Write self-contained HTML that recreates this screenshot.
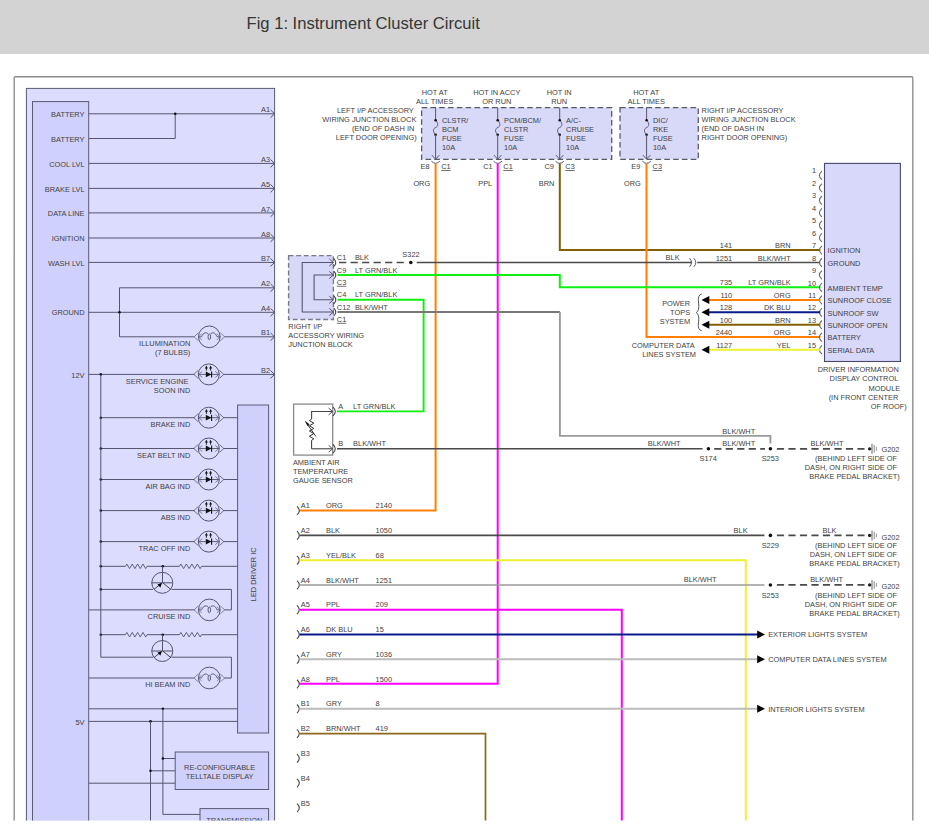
<!DOCTYPE html>
<html><head><meta charset="utf-8"><style>
html,body{margin:0;padding:0;background:#fff;width:929px;height:836px;overflow:hidden}
#hdr{position:absolute;left:0;top:0;width:929px;height:53.5px;background:#d3d3d3}
#ttl{position:absolute;left:246.5px;top:14.2px;line-height:19px;font-family:"Liberation Sans",sans-serif;font-size:16.6px;color:#363636;white-space:nowrap}
svg{position:absolute;left:0;top:0}
svg text{font-family:"Liberation Sans",sans-serif}
</style></head><body>
<div id="hdr"></div><div id="ttl">Fig 1: Instrument Cluster Circuit</div>
<svg width="929" height="836" viewBox="0 0 929 836">
<defs><clipPath id="cp"><rect x="0" y="60" width="929" height="760.6"/></clipPath></defs>
<g clip-path="url(#cp)">
<path d="M14.2,836 L14.2,78 Q14.2,76.8 15.4,76.8 L911.6,76.8 Q912.8,76.8 912.8,78 L912.8,836" stroke="#8e8e8e" stroke-width="1.4" fill="none" />
<rect x="26.4" y="88.4" width="248.2" height="900" stroke="#5a5a74" stroke-width="1.0" fill="#dcdcfe"/>
<rect x="32.5" y="101.6" width="56.2" height="900" stroke="#5a5a74" stroke-width="1.0" fill="#d0d0fc"/>
<text x="84.5" y="116.95" text-anchor="end" font-size="7.4" fill="#424242" >BATTERY</text>
<text x="84.5" y="141.65" text-anchor="end" font-size="7.4" fill="#424242" >BATTERY</text>
<text x="84.5" y="166.55" text-anchor="end" font-size="7.4" fill="#424242" >COOL LVL</text>
<text x="84.5" y="191.55" text-anchor="end" font-size="7.4" fill="#424242" >BRAKE LVL</text>
<text x="84.5" y="216.05" text-anchor="end" font-size="7.4" fill="#424242" >DATA LINE</text>
<text x="84.5" y="241.15" text-anchor="end" font-size="7.4" fill="#424242" >IGNITION</text>
<text x="84.5" y="265.55" text-anchor="end" font-size="7.4" fill="#424242" >WASH LVL</text>
<text x="84.5" y="315.45" text-anchor="end" font-size="7.4" fill="#424242" >GROUND</text>
<text x="270" y="112.45" text-anchor="end" font-size="7.4" fill="#424242" >A1</text>
<text x="270" y="162.05" text-anchor="end" font-size="7.4" fill="#424242" >A3</text>
<text x="270" y="187.05" text-anchor="end" font-size="7.4" fill="#424242" >A5</text>
<text x="270" y="211.55" text-anchor="end" font-size="7.4" fill="#424242" >A7</text>
<text x="270" y="236.65" text-anchor="end" font-size="7.4" fill="#424242" >A8</text>
<text x="270" y="261.05" text-anchor="end" font-size="7.4" fill="#424242" >B7</text>
<text x="270" y="286.45" text-anchor="end" font-size="7.4" fill="#424242" >A2</text>
<text x="270" y="310.95" text-anchor="end" font-size="7.4" fill="#424242" >A4</text>
<text x="270" y="335.45" text-anchor="end" font-size="7.4" fill="#424242" >B1</text>
<line x1="88.7" y1="113.8" x2="274.6" y2="113.8" stroke="#55556f" stroke-width="1"/>
<polyline points="270.5,109.9 274.6,113.8 270.5,117.7" stroke="#55556f" stroke-width="1" fill="none" stroke-linejoin="miter"/>
<line x1="88.7" y1="163.4" x2="274.6" y2="163.4" stroke="#55556f" stroke-width="1"/>
<polyline points="270.5,159.5 274.6,163.4 270.5,167.3" stroke="#55556f" stroke-width="1" fill="none" stroke-linejoin="miter"/>
<line x1="88.7" y1="188.4" x2="274.6" y2="188.4" stroke="#55556f" stroke-width="1"/>
<polyline points="270.5,184.5 274.6,188.4 270.5,192.3" stroke="#55556f" stroke-width="1" fill="none" stroke-linejoin="miter"/>
<line x1="88.7" y1="212.9" x2="274.6" y2="212.9" stroke="#55556f" stroke-width="1"/>
<polyline points="270.5,209 274.6,212.9 270.5,216.8" stroke="#55556f" stroke-width="1" fill="none" stroke-linejoin="miter"/>
<line x1="88.7" y1="238" x2="274.6" y2="238" stroke="#55556f" stroke-width="1"/>
<polyline points="270.5,234.1 274.6,238 270.5,241.9" stroke="#55556f" stroke-width="1" fill="none" stroke-linejoin="miter"/>
<line x1="88.7" y1="262.4" x2="274.6" y2="262.4" stroke="#55556f" stroke-width="1"/>
<polyline points="270.5,258.5 274.6,262.4 270.5,266.3" stroke="#55556f" stroke-width="1" fill="none" stroke-linejoin="miter"/>
<line x1="88.7" y1="312.3" x2="274.6" y2="312.3" stroke="#55556f" stroke-width="1"/>
<polyline points="270.5,308.4 274.6,312.3 270.5,316.2" stroke="#55556f" stroke-width="1" fill="none" stroke-linejoin="miter"/>
<polyline points="88.7,138.5 175.2,138.5 175.2,113.8" stroke="#55556f" stroke-width="1" fill="none" stroke-linejoin="miter"/>
<circle cx="175.2" cy="113.8" r="1.3" fill="#111"/>
<polyline points="274.6,287.8 119.5,287.8 119.5,336.8 194.1,336.8" stroke="#55556f" stroke-width="1" fill="none" stroke-linejoin="miter"/>
<polyline points="270.5,283.9 274.6,287.8 270.5,291.7" stroke="#55556f" stroke-width="1" fill="none" stroke-linejoin="miter"/>
<polyline points="270.5,332.9 274.6,336.8 270.5,340.7" stroke="#55556f" stroke-width="1" fill="none" stroke-linejoin="miter"/>
<line x1="224.7" y1="336.8" x2="274.6" y2="336.8" stroke="#55556f" stroke-width="1"/>
<circle cx="119.5" cy="312.3" r="1.3" fill="#111"/>
<circle cx="209.3" cy="336.8" r="10.85" stroke="#55556f" stroke-width="1" fill="none"/>
<polyline points="198.3,332.8 194.1,336.8 198.3,340.8" stroke="#6a6a88" stroke-width="0.8" fill="none" stroke-linejoin="miter"/>
<polyline points="220.3,332.8 224.7,336.8 220.3,340.8" stroke="#6a6a88" stroke-width="0.8" fill="none" stroke-linejoin="miter"/>
<polyline points="201.7,333.8 198.5,336.8 201.7,339.8" stroke="#6a6a88" stroke-width="0.75" fill="none" stroke-linejoin="miter"/>
<polyline points="216.9,333.8 220.1,336.8 216.9,339.8" stroke="#6a6a88" stroke-width="0.75" fill="none" stroke-linejoin="miter"/>
<line x1="198.5" y1="336.8" x2="201.5" y2="336.8" stroke="#55556f" stroke-width="0.9"/>
<line x1="217.1" y1="336.8" x2="220.1" y2="336.8" stroke="#55556f" stroke-width="0.9"/>
<path d="M201.5,336.8 C203.3,332.2 206.7,331.8 208.2,334.2 M210.4,334.2 C211.9,331.8 215.3,332.2 217.1,336.8" stroke="#55556f" stroke-width="0.95" fill="none" />
<ellipse cx="209.3" cy="336.8" rx="1.25" ry="2.9" stroke="#55556f" stroke-width="0.95" fill="none"/>
<text x="190.3" y="346.25" text-anchor="end" font-size="7.4" fill="#424242" >ILLUMINATION</text>
<text x="190.3" y="355.35" text-anchor="end" font-size="7.4" fill="#424242" >(7 BULBS)</text>
<text x="84.5" y="377.55" text-anchor="end" font-size="7.4" fill="#424242" >12V</text>
<text x="270" y="373.05" text-anchor="end" font-size="7.4" fill="#424242" >B2</text>
<line x1="88.7" y1="374.4" x2="194.3" y2="374.4" stroke="#55556f" stroke-width="1"/>
<circle cx="208.8" cy="374.4" r="10.5" stroke="#55556f" stroke-width="1" fill="none"/>
<polyline points="198.2,370.4 193.8,374.4 198.2,378.4" stroke="#55556f" stroke-width="0.8" fill="none" stroke-linejoin="miter"/>
<polyline points="219.4,370.4 223.8,374.4 219.4,378.4" stroke="#55556f" stroke-width="0.8" fill="none" stroke-linejoin="miter"/>
<line x1="198.3" y1="374.4" x2="219.3" y2="374.4" stroke="#55556f" stroke-width="0.9"/>
<polyline points="202.3,371.4 198.8,374.4 202.3,377.4" stroke="#55556f" stroke-width="0.7" fill="none" stroke-linejoin="miter"/>
<polyline points="215.3,371.4 218.8,374.4 215.3,377.4" stroke="#55556f" stroke-width="0.7" fill="none" stroke-linejoin="miter"/>
<polygon points="205.8,371.5 211.4,374.4 205.8,377.3" fill="#111"/>
<line x1="211.6" y1="371.4" x2="211.6" y2="377.6" stroke="#111" stroke-width="1.1"/>
<line x1="206.4" y1="370.6" x2="206.4" y2="367.9" stroke="#111" stroke-width="0.9"/>
<polygon points="204.9,368.4 206.4,365.6 207.9,368.4" fill="#111"/>
<line x1="210.6" y1="370.6" x2="210.6" y2="367.9" stroke="#111" stroke-width="0.9"/>
<polygon points="209.1,368.4 210.6,365.6 212.1,368.4" fill="#111"/>
<line x1="223.3" y1="374.4" x2="274.6" y2="374.4" stroke="#55556f" stroke-width="1"/>
<polyline points="270.5,370.5 274.6,374.4 270.5,378.3" stroke="#55556f" stroke-width="1" fill="none" stroke-linejoin="miter"/>
<circle cx="100.8" cy="374.4" r="1.3" fill="#111"/>
<text x="188.5" y="383.95" text-anchor="end" font-size="7.4" fill="#424242" >SERVICE ENGINE</text>
<text x="190.3" y="392.95" text-anchor="end" font-size="7.4" fill="#424242" >SOON IND</text>
<rect x="237.6" y="405" width="31" height="328" stroke="#5a5a74" stroke-width="1.0" fill="#d0d0fc"/>
<text x="0" y="0" font-size="7.4" fill="#424242" text-anchor="middle" transform="translate(256.2,574.3) rotate(-90)">LED DRIVER IC</text>
<line x1="100.8" y1="417.7" x2="194.3" y2="417.7" stroke="#55556f" stroke-width="1"/>
<circle cx="208.8" cy="417.7" r="10.5" stroke="#55556f" stroke-width="1" fill="none"/>
<polyline points="198.2,413.7 193.8,417.7 198.2,421.7" stroke="#55556f" stroke-width="0.8" fill="none" stroke-linejoin="miter"/>
<polyline points="219.4,413.7 223.8,417.7 219.4,421.7" stroke="#55556f" stroke-width="0.8" fill="none" stroke-linejoin="miter"/>
<line x1="198.3" y1="417.7" x2="219.3" y2="417.7" stroke="#55556f" stroke-width="0.9"/>
<polyline points="202.3,414.7 198.8,417.7 202.3,420.7" stroke="#55556f" stroke-width="0.7" fill="none" stroke-linejoin="miter"/>
<polyline points="215.3,414.7 218.8,417.7 215.3,420.7" stroke="#55556f" stroke-width="0.7" fill="none" stroke-linejoin="miter"/>
<polygon points="205.8,414.8 211.4,417.7 205.8,420.6" fill="#111"/>
<line x1="211.6" y1="414.7" x2="211.6" y2="420.9" stroke="#111" stroke-width="1.1"/>
<line x1="206.4" y1="413.9" x2="206.4" y2="411.2" stroke="#111" stroke-width="0.9"/>
<polygon points="204.9,411.7 206.4,408.9 207.9,411.7" fill="#111"/>
<line x1="210.6" y1="413.9" x2="210.6" y2="411.2" stroke="#111" stroke-width="0.9"/>
<polygon points="209.1,411.7 210.6,408.9 212.1,411.7" fill="#111"/>
<line x1="223.3" y1="417.7" x2="237.6" y2="417.7" stroke="#55556f" stroke-width="1"/>
<circle cx="100.8" cy="417.7" r="1.3" fill="#111"/>
<text x="190.3" y="427.35" text-anchor="end" font-size="7.4" fill="#424242" >BRAKE IND</text>
<line x1="100.8" y1="448.5" x2="194.3" y2="448.5" stroke="#55556f" stroke-width="1"/>
<circle cx="208.8" cy="448.5" r="10.5" stroke="#55556f" stroke-width="1" fill="none"/>
<polyline points="198.2,444.5 193.8,448.5 198.2,452.5" stroke="#55556f" stroke-width="0.8" fill="none" stroke-linejoin="miter"/>
<polyline points="219.4,444.5 223.8,448.5 219.4,452.5" stroke="#55556f" stroke-width="0.8" fill="none" stroke-linejoin="miter"/>
<line x1="198.3" y1="448.5" x2="219.3" y2="448.5" stroke="#55556f" stroke-width="0.9"/>
<polyline points="202.3,445.5 198.8,448.5 202.3,451.5" stroke="#55556f" stroke-width="0.7" fill="none" stroke-linejoin="miter"/>
<polyline points="215.3,445.5 218.8,448.5 215.3,451.5" stroke="#55556f" stroke-width="0.7" fill="none" stroke-linejoin="miter"/>
<polygon points="205.8,445.6 211.4,448.5 205.8,451.4" fill="#111"/>
<line x1="211.6" y1="445.5" x2="211.6" y2="451.7" stroke="#111" stroke-width="1.1"/>
<line x1="206.4" y1="444.7" x2="206.4" y2="442" stroke="#111" stroke-width="0.9"/>
<polygon points="204.9,442.5 206.4,439.7 207.9,442.5" fill="#111"/>
<line x1="210.6" y1="444.7" x2="210.6" y2="442" stroke="#111" stroke-width="0.9"/>
<polygon points="209.1,442.5 210.6,439.7 212.1,442.5" fill="#111"/>
<line x1="223.3" y1="448.5" x2="237.6" y2="448.5" stroke="#55556f" stroke-width="1"/>
<circle cx="100.8" cy="448.5" r="1.3" fill="#111"/>
<text x="190.3" y="458.15" text-anchor="end" font-size="7.4" fill="#424242" >SEAT BELT IND</text>
<line x1="100.8" y1="479.5" x2="194.3" y2="479.5" stroke="#55556f" stroke-width="1"/>
<circle cx="208.8" cy="479.5" r="10.5" stroke="#55556f" stroke-width="1" fill="none"/>
<polyline points="198.2,475.5 193.8,479.5 198.2,483.5" stroke="#55556f" stroke-width="0.8" fill="none" stroke-linejoin="miter"/>
<polyline points="219.4,475.5 223.8,479.5 219.4,483.5" stroke="#55556f" stroke-width="0.8" fill="none" stroke-linejoin="miter"/>
<line x1="198.3" y1="479.5" x2="219.3" y2="479.5" stroke="#55556f" stroke-width="0.9"/>
<polyline points="202.3,476.5 198.8,479.5 202.3,482.5" stroke="#55556f" stroke-width="0.7" fill="none" stroke-linejoin="miter"/>
<polyline points="215.3,476.5 218.8,479.5 215.3,482.5" stroke="#55556f" stroke-width="0.7" fill="none" stroke-linejoin="miter"/>
<polygon points="205.8,476.6 211.4,479.5 205.8,482.4" fill="#111"/>
<line x1="211.6" y1="476.5" x2="211.6" y2="482.7" stroke="#111" stroke-width="1.1"/>
<line x1="206.4" y1="475.7" x2="206.4" y2="473" stroke="#111" stroke-width="0.9"/>
<polygon points="204.9,473.5 206.4,470.7 207.9,473.5" fill="#111"/>
<line x1="210.6" y1="475.7" x2="210.6" y2="473" stroke="#111" stroke-width="0.9"/>
<polygon points="209.1,473.5 210.6,470.7 212.1,473.5" fill="#111"/>
<line x1="223.3" y1="479.5" x2="237.6" y2="479.5" stroke="#55556f" stroke-width="1"/>
<circle cx="100.8" cy="479.5" r="1.3" fill="#111"/>
<text x="190.3" y="489.15" text-anchor="end" font-size="7.4" fill="#424242" >AIR BAG IND</text>
<line x1="100.8" y1="510.6" x2="194.3" y2="510.6" stroke="#55556f" stroke-width="1"/>
<circle cx="208.8" cy="510.6" r="10.5" stroke="#55556f" stroke-width="1" fill="none"/>
<polyline points="198.2,506.6 193.8,510.6 198.2,514.6" stroke="#55556f" stroke-width="0.8" fill="none" stroke-linejoin="miter"/>
<polyline points="219.4,506.6 223.8,510.6 219.4,514.6" stroke="#55556f" stroke-width="0.8" fill="none" stroke-linejoin="miter"/>
<line x1="198.3" y1="510.6" x2="219.3" y2="510.6" stroke="#55556f" stroke-width="0.9"/>
<polyline points="202.3,507.6 198.8,510.6 202.3,513.6" stroke="#55556f" stroke-width="0.7" fill="none" stroke-linejoin="miter"/>
<polyline points="215.3,507.6 218.8,510.6 215.3,513.6" stroke="#55556f" stroke-width="0.7" fill="none" stroke-linejoin="miter"/>
<polygon points="205.8,507.7 211.4,510.6 205.8,513.5" fill="#111"/>
<line x1="211.6" y1="507.6" x2="211.6" y2="513.8" stroke="#111" stroke-width="1.1"/>
<line x1="206.4" y1="506.8" x2="206.4" y2="504.1" stroke="#111" stroke-width="0.9"/>
<polygon points="204.9,504.6 206.4,501.8 207.9,504.6" fill="#111"/>
<line x1="210.6" y1="506.8" x2="210.6" y2="504.1" stroke="#111" stroke-width="0.9"/>
<polygon points="209.1,504.6 210.6,501.8 212.1,504.6" fill="#111"/>
<line x1="223.3" y1="510.6" x2="237.6" y2="510.6" stroke="#55556f" stroke-width="1"/>
<circle cx="100.8" cy="510.6" r="1.3" fill="#111"/>
<text x="190.3" y="520.25" text-anchor="end" font-size="7.4" fill="#424242" >ABS IND</text>
<line x1="100.8" y1="541.6" x2="194.3" y2="541.6" stroke="#55556f" stroke-width="1"/>
<circle cx="208.8" cy="541.6" r="10.5" stroke="#55556f" stroke-width="1" fill="none"/>
<polyline points="198.2,537.6 193.8,541.6 198.2,545.6" stroke="#55556f" stroke-width="0.8" fill="none" stroke-linejoin="miter"/>
<polyline points="219.4,537.6 223.8,541.6 219.4,545.6" stroke="#55556f" stroke-width="0.8" fill="none" stroke-linejoin="miter"/>
<line x1="198.3" y1="541.6" x2="219.3" y2="541.6" stroke="#55556f" stroke-width="0.9"/>
<polyline points="202.3,538.6 198.8,541.6 202.3,544.6" stroke="#55556f" stroke-width="0.7" fill="none" stroke-linejoin="miter"/>
<polyline points="215.3,538.6 218.8,541.6 215.3,544.6" stroke="#55556f" stroke-width="0.7" fill="none" stroke-linejoin="miter"/>
<polygon points="205.8,538.7 211.4,541.6 205.8,544.5" fill="#111"/>
<line x1="211.6" y1="538.6" x2="211.6" y2="544.8" stroke="#111" stroke-width="1.1"/>
<line x1="206.4" y1="537.8" x2="206.4" y2="535.1" stroke="#111" stroke-width="0.9"/>
<polygon points="204.9,535.6 206.4,532.8 207.9,535.6" fill="#111"/>
<line x1="210.6" y1="537.8" x2="210.6" y2="535.1" stroke="#111" stroke-width="0.9"/>
<polygon points="209.1,535.6 210.6,532.8 212.1,535.6" fill="#111"/>
<line x1="223.3" y1="541.6" x2="237.6" y2="541.6" stroke="#55556f" stroke-width="1"/>
<circle cx="100.8" cy="541.6" r="1.3" fill="#111"/>
<text x="190.3" y="551.25" text-anchor="end" font-size="7.4" fill="#424242" >TRAC OFF IND</text>
<line x1="100.8" y1="566.3" x2="125.5" y2="566.3" stroke="#55556f" stroke-width="1"/>
<polyline points="125.5,566.3 126.84,564 129.53,568.6 132.22,564 134.91,568.6 137.59,564 140.28,568.6 142.97,564 145.66,568.6 147,566.3" stroke="#55556f" stroke-width="0.9" fill="none" stroke-linejoin="miter"/>
<line x1="147" y1="566.3" x2="179.5" y2="566.3" stroke="#55556f" stroke-width="1"/>
<polyline points="179.5,566.3 180.88,564 183.62,568.6 186.38,564 189.12,568.6 191.88,564 194.62,568.6 197.38,564 200.12,568.6 201.5,566.3" stroke="#55556f" stroke-width="0.9" fill="none" stroke-linejoin="miter"/>
<line x1="201.5" y1="566.3" x2="237.6" y2="566.3" stroke="#55556f" stroke-width="1"/>
<circle cx="100.8" cy="566.3" r="1.3" fill="#111"/>
<circle cx="162.8" cy="566.3" r="1.3" fill="#111"/>
<circle cx="162.3" cy="582.8" r="10.5" stroke="#55556f" stroke-width="1" fill="none"/>
<line x1="162.5" y1="566.3" x2="162.5" y2="582.8" stroke="#55556f" stroke-width="1"/>
<line x1="151.3" y1="582.8" x2="172.1" y2="582.8" stroke="#55556f" stroke-width="1"/>
<line x1="161.8" y1="583.1" x2="154.1" y2="589.3" stroke="#333" stroke-width="0.9"/>
<line x1="162.8" y1="582.8" x2="170.7" y2="589.3" stroke="#333" stroke-width="0.9"/>
<polygon points="161.9,583.1 157.4,584.4 160.4,587.4" fill="#000"/>
<line x1="100.8" y1="589.4" x2="153" y2="589.4" stroke="#55556f" stroke-width="1"/>
<circle cx="100.8" cy="589.4" r="1.3" fill="#111"/>
<polyline points="171.5,589.4 231.4,589.4 231.4,609.9 224.3,609.9" stroke="#55556f" stroke-width="1" fill="none" stroke-linejoin="miter"/>
<circle cx="209.3" cy="609.9" r="10.85" stroke="#55556f" stroke-width="1" fill="none"/>
<polyline points="198.3,605.9 194.1,609.9 198.3,613.9" stroke="#6a6a88" stroke-width="0.8" fill="none" stroke-linejoin="miter"/>
<polyline points="220.3,605.9 224.7,609.9 220.3,613.9" stroke="#6a6a88" stroke-width="0.8" fill="none" stroke-linejoin="miter"/>
<polyline points="201.7,606.9 198.5,609.9 201.7,612.9" stroke="#6a6a88" stroke-width="0.75" fill="none" stroke-linejoin="miter"/>
<polyline points="216.9,606.9 220.1,609.9 216.9,612.9" stroke="#6a6a88" stroke-width="0.75" fill="none" stroke-linejoin="miter"/>
<line x1="198.5" y1="609.9" x2="201.5" y2="609.9" stroke="#55556f" stroke-width="0.9"/>
<line x1="217.1" y1="609.9" x2="220.1" y2="609.9" stroke="#55556f" stroke-width="0.9"/>
<path d="M201.5,609.9 C203.3,605.3 206.7,604.9 208.2,607.3 M210.4,607.3 C211.9,604.9 215.3,605.3 217.1,609.9" stroke="#55556f" stroke-width="0.95" fill="none" />
<ellipse cx="209.3" cy="609.9" rx="1.25" ry="2.9" stroke="#55556f" stroke-width="0.95" fill="none"/>
<line x1="88.7" y1="609.9" x2="194.3" y2="609.9" stroke="#55556f" stroke-width="1"/>
<text x="190.3" y="619.15" text-anchor="end" font-size="7.4" fill="#424242" >CRUISE IND</text>
<line x1="100.8" y1="634.7" x2="125.5" y2="634.7" stroke="#55556f" stroke-width="1"/>
<polyline points="125.5,634.7 126.84,632.4 129.53,637 132.22,632.4 134.91,637 137.59,632.4 140.28,637 142.97,632.4 145.66,637 147,634.7" stroke="#55556f" stroke-width="0.9" fill="none" stroke-linejoin="miter"/>
<line x1="147" y1="634.7" x2="179.5" y2="634.7" stroke="#55556f" stroke-width="1"/>
<polyline points="179.5,634.7 180.88,632.4 183.62,637 186.38,632.4 189.12,637 191.88,632.4 194.62,637 197.38,632.4 200.12,637 201.5,634.7" stroke="#55556f" stroke-width="0.9" fill="none" stroke-linejoin="miter"/>
<line x1="201.5" y1="634.7" x2="237.6" y2="634.7" stroke="#55556f" stroke-width="1"/>
<circle cx="100.8" cy="634.7" r="1.3" fill="#111"/>
<circle cx="162.8" cy="634.7" r="1.3" fill="#111"/>
<circle cx="162.3" cy="651" r="10.5" stroke="#55556f" stroke-width="1" fill="none"/>
<line x1="162.5" y1="634.7" x2="162.5" y2="651" stroke="#55556f" stroke-width="1"/>
<line x1="151.3" y1="651" x2="172.1" y2="651" stroke="#55556f" stroke-width="1"/>
<line x1="161.8" y1="651.3" x2="154.1" y2="657.5" stroke="#333" stroke-width="0.9"/>
<line x1="162.8" y1="651" x2="170.7" y2="657.5" stroke="#333" stroke-width="0.9"/>
<polygon points="161.9,651.3 157.4,652.6 160.4,655.6" fill="#000"/>
<line x1="100.8" y1="657.2" x2="153" y2="657.2" stroke="#55556f" stroke-width="1"/>
<polyline points="171.5,657.2 231.4,657.2 231.4,678 224.3,678" stroke="#55556f" stroke-width="1" fill="none" stroke-linejoin="miter"/>
<circle cx="209.3" cy="678" r="10.85" stroke="#55556f" stroke-width="1" fill="none"/>
<polyline points="198.3,674 194.1,678 198.3,682" stroke="#6a6a88" stroke-width="0.8" fill="none" stroke-linejoin="miter"/>
<polyline points="220.3,674 224.7,678 220.3,682" stroke="#6a6a88" stroke-width="0.8" fill="none" stroke-linejoin="miter"/>
<polyline points="201.7,675 198.5,678 201.7,681" stroke="#6a6a88" stroke-width="0.75" fill="none" stroke-linejoin="miter"/>
<polyline points="216.9,675 220.1,678 216.9,681" stroke="#6a6a88" stroke-width="0.75" fill="none" stroke-linejoin="miter"/>
<line x1="198.5" y1="678" x2="201.5" y2="678" stroke="#55556f" stroke-width="0.9"/>
<line x1="217.1" y1="678" x2="220.1" y2="678" stroke="#55556f" stroke-width="0.9"/>
<path d="M201.5,678 C203.3,673.4 206.7,673 208.2,675.4 M210.4,675.4 C211.9,673 215.3,673.4 217.1,678" stroke="#55556f" stroke-width="0.95" fill="none" />
<ellipse cx="209.3" cy="678" rx="1.25" ry="2.9" stroke="#55556f" stroke-width="0.95" fill="none"/>
<line x1="88.7" y1="678" x2="194.3" y2="678" stroke="#55556f" stroke-width="1"/>
<text x="190.3" y="687.25" text-anchor="end" font-size="7.4" fill="#424242" >HI BEAM IND</text>
<line x1="100.8" y1="374.4" x2="100.8" y2="657.2" stroke="#55556f" stroke-width="1"/>
<line x1="88.7" y1="708.8" x2="237.6" y2="708.8" stroke="#55556f" stroke-width="1"/>
<circle cx="162.9" cy="708.8" r="1.3" fill="#111"/>
<line x1="88.7" y1="721.4" x2="237.6" y2="721.4" stroke="#55556f" stroke-width="1"/>
<circle cx="150.5" cy="721.4" r="1.3" fill="#111"/>
<text x="84.5" y="724.65" text-anchor="end" font-size="7.4" fill="#424242" >5V</text>
<polyline points="162.9,708.8 162.9,814.4 200,814.4" stroke="#55556f" stroke-width="1" fill="none" stroke-linejoin="miter"/>
<line x1="150.5" y1="721.4" x2="150.5" y2="836" stroke="#55556f" stroke-width="1"/>
<rect x="175.2" y="752" width="93.4" height="37.5" stroke="#5a5a74" stroke-width="1.0" fill="#d0d0fc"/>
<line x1="162.9" y1="758.5" x2="175.2" y2="758.5" stroke="#55556f" stroke-width="1"/>
<circle cx="162.9" cy="758.5" r="1.3" fill="#111"/>
<line x1="150.5" y1="770.8" x2="175.2" y2="770.8" stroke="#55556f" stroke-width="1"/>
<circle cx="150.5" cy="770.8" r="1.3" fill="#111"/>
<line x1="88.7" y1="783.2" x2="175.2" y2="783.2" stroke="#55556f" stroke-width="1"/>
<text x="219.6" y="769.85" text-anchor="middle" font-size="7.4" fill="#424242" >RE-CONFIGURABLE</text>
<text x="219.6" y="778.95" text-anchor="middle" font-size="7.4" fill="#424242" >TELLTALE DISPLAY</text>
<rect x="200" y="808.6" width="68.6" height="40" stroke="#5a5a74" stroke-width="1.0" fill="#d0d0fc"/>
<text x="234.3" y="823.15" text-anchor="middle" font-size="7.4" fill="#424242" >TRANSMISSION</text>
<rect x="421.6" y="107.6" width="190.1" height="51.7" stroke="#5a5a66" stroke-width="1.3" fill="#d8d8f8" stroke-dasharray="5.6,3.2"/>
<rect x="620" y="107.6" width="78.3" height="51.7" stroke="#5a5a66" stroke-width="1.3" fill="#d8d8f8" stroke-dasharray="5.6,3.2"/>
<line x1="435.6" y1="107.6" x2="435.6" y2="120.2" stroke="#55556f" stroke-width="1"/>
<path d="M435.6,120.2 C438.8,123.5 438.1,126.5 435.6,127.5 C433.1,128.5 432.4,131.5 435.6,134.8" stroke="#55556f" stroke-width="1" fill="none" />
<circle cx="435.6" cy="120.2" r="1.3" fill="#111"/>
<circle cx="435.6" cy="134.8" r="1.3" fill="#111"/>
<line x1="435.6" y1="134.8" x2="435.6" y2="159.2" stroke="#55556f" stroke-width="1"/>
<polyline points="431.8,155 435.6,159.2 439.4,155" stroke="#55556f" stroke-width="0.9" fill="none" stroke-linejoin="miter"/>
<path d="M431.4,161.2 Q435.6,165.5 439.8,161.2" stroke="#55556f" stroke-width="1" fill="none" />
<line x1="497.7" y1="107.6" x2="497.7" y2="120.2" stroke="#55556f" stroke-width="1"/>
<path d="M497.7,120.2 C500.9,123.5 500.2,126.5 497.7,127.5 C495.2,128.5 494.5,131.5 497.7,134.8" stroke="#55556f" stroke-width="1" fill="none" />
<circle cx="497.7" cy="120.2" r="1.3" fill="#111"/>
<circle cx="497.7" cy="134.8" r="1.3" fill="#111"/>
<line x1="497.7" y1="134.8" x2="497.7" y2="159.2" stroke="#55556f" stroke-width="1"/>
<polyline points="493.9,155 497.7,159.2 501.5,155" stroke="#55556f" stroke-width="0.9" fill="none" stroke-linejoin="miter"/>
<path d="M493.5,161.2 Q497.7,165.5 501.9,161.2" stroke="#55556f" stroke-width="1" fill="none" />
<line x1="559.7" y1="107.6" x2="559.7" y2="120.2" stroke="#55556f" stroke-width="1"/>
<path d="M559.7,120.2 C562.9,123.5 562.2,126.5 559.7,127.5 C557.2,128.5 556.5,131.5 559.7,134.8" stroke="#55556f" stroke-width="1" fill="none" />
<circle cx="559.7" cy="120.2" r="1.3" fill="#111"/>
<circle cx="559.7" cy="134.8" r="1.3" fill="#111"/>
<line x1="559.7" y1="134.8" x2="559.7" y2="159.2" stroke="#55556f" stroke-width="1"/>
<polyline points="555.9,155 559.7,159.2 563.5,155" stroke="#55556f" stroke-width="0.9" fill="none" stroke-linejoin="miter"/>
<path d="M555.5,161.2 Q559.7,165.5 563.9,161.2" stroke="#55556f" stroke-width="1" fill="none" />
<line x1="646.6" y1="107.6" x2="646.6" y2="120.2" stroke="#55556f" stroke-width="1"/>
<path d="M646.6,120.2 C649.8,123.5 649.1,126.5 646.6,127.5 C644.1,128.5 643.4,131.5 646.6,134.8" stroke="#55556f" stroke-width="1" fill="none" />
<circle cx="646.6" cy="120.2" r="1.3" fill="#111"/>
<circle cx="646.6" cy="134.8" r="1.3" fill="#111"/>
<line x1="646.6" y1="134.8" x2="646.6" y2="159.2" stroke="#55556f" stroke-width="1"/>
<polyline points="642.8,155 646.6,159.2 650.4,155" stroke="#55556f" stroke-width="0.9" fill="none" stroke-linejoin="miter"/>
<path d="M642.4,161.2 Q646.6,165.5 650.8,161.2" stroke="#55556f" stroke-width="1" fill="none" />
<text x="434.7" y="95.25" text-anchor="middle" font-size="7.4" fill="#424242" >HOT AT</text>
<text x="434.7" y="104.15" text-anchor="middle" font-size="7.4" fill="#424242" >ALL TIMES</text>
<text x="496.8" y="95.25" text-anchor="middle" font-size="7.4" fill="#424242" >HOT IN ACCY</text>
<text x="496.8" y="104.15" text-anchor="middle" font-size="7.4" fill="#424242" >OR RUN</text>
<text x="559.2" y="95.25" text-anchor="middle" font-size="7.4" fill="#424242" >HOT IN</text>
<text x="559.2" y="104.15" text-anchor="middle" font-size="7.4" fill="#424242" >RUN</text>
<text x="646.2" y="95.25" text-anchor="middle" font-size="7.4" fill="#424242" >HOT AT</text>
<text x="646.2" y="104.15" text-anchor="middle" font-size="7.4" fill="#424242" >ALL TIMES</text>
<text x="442" y="122.55" text-anchor="start" font-size="7.4" fill="#424242" >CLSTR/</text>
<text x="442" y="131.6" text-anchor="start" font-size="7.4" fill="#424242" >BCM</text>
<text x="442" y="140.65" text-anchor="start" font-size="7.4" fill="#424242" >FUSE</text>
<text x="442" y="149.7" text-anchor="start" font-size="7.4" fill="#424242" >10A</text>
<text x="504.1" y="122.55" text-anchor="start" font-size="7.4" fill="#424242" >PCM/BCM/</text>
<text x="504.1" y="131.6" text-anchor="start" font-size="7.4" fill="#424242" >CLSTR</text>
<text x="504.1" y="140.65" text-anchor="start" font-size="7.4" fill="#424242" >FUSE</text>
<text x="504.1" y="149.7" text-anchor="start" font-size="7.4" fill="#424242" >10A</text>
<text x="566.1" y="122.55" text-anchor="start" font-size="7.4" fill="#424242" >A/C-</text>
<text x="566.1" y="131.6" text-anchor="start" font-size="7.4" fill="#424242" >CRUISE</text>
<text x="566.1" y="140.65" text-anchor="start" font-size="7.4" fill="#424242" >FUSE</text>
<text x="566.1" y="149.7" text-anchor="start" font-size="7.4" fill="#424242" >10A</text>
<text x="653" y="122.55" text-anchor="start" font-size="7.4" fill="#424242" >DIC/</text>
<text x="653" y="131.6" text-anchor="start" font-size="7.4" fill="#424242" >RKE</text>
<text x="653" y="140.65" text-anchor="start" font-size="7.4" fill="#424242" >FUSE</text>
<text x="653" y="149.7" text-anchor="start" font-size="7.4" fill="#424242" >10A</text>
<text x="413.8" y="113.15" text-anchor="end" font-size="7.4" fill="#424242" >LEFT I/P ACCESSORY</text>
<text x="416.4" y="122.15" text-anchor="end" font-size="7.4" fill="#424242" >WIRING JUNCTION BLOCK</text>
<text x="414.3" y="131.15" text-anchor="end" font-size="7.4" fill="#424242" >(END OF DASH IN</text>
<text x="416.6" y="140.15" text-anchor="end" font-size="7.4" fill="#424242" >LEFT DOOR OPENING)</text>
<text x="701.6" y="113.05" text-anchor="start" font-size="7.4" fill="#424242" >RIGHT I/P ACCESSORY</text>
<text x="701.6" y="122.05" text-anchor="start" font-size="7.4" fill="#424242" >WIRING JUNCTION BLOCK</text>
<text x="701.6" y="131.05" text-anchor="start" font-size="7.4" fill="#424242" >(END OF DASH IN</text>
<text x="701.6" y="140.05" text-anchor="start" font-size="7.4" fill="#424242" >RIGHT DOOR OPENING)</text>
<text x="425" y="169.15" text-anchor="middle" font-size="7.4" fill="#424242" >E8</text>
<text x="441.2" y="169.15" text-anchor="start" font-size="7.4" fill="#424242" text-decoration="underline" >C1</text>
<text x="488" y="169.15" text-anchor="middle" font-size="7.4" fill="#424242" >C1</text>
<text x="503.3" y="169.15" text-anchor="start" font-size="7.4" fill="#424242" text-decoration="underline" >C1</text>
<text x="549.2" y="169.15" text-anchor="middle" font-size="7.4" fill="#424242" >C9</text>
<text x="565.3" y="169.15" text-anchor="start" font-size="7.4" fill="#424242" text-decoration="underline" >C3</text>
<text x="635.8" y="169.15" text-anchor="middle" font-size="7.4" fill="#424242" >E9</text>
<text x="652.6" y="169.15" text-anchor="start" font-size="7.4" fill="#424242" text-decoration="underline" >C3</text>
<text x="421.8" y="186.05" text-anchor="middle" font-size="7.4" fill="#424242" >ORG</text>
<text x="485.2" y="186.05" text-anchor="middle" font-size="7.4" fill="#424242" >PPL</text>
<text x="546.6" y="186.05" text-anchor="middle" font-size="7.4" fill="#424242" >BRN</text>
<text x="632.4" y="186.05" text-anchor="middle" font-size="7.4" fill="#424242" >ORG</text>
<polyline points="435.6,163.5 435.6,510.4 299.5,510.4" stroke="#ff8000" stroke-width="2" fill="none" stroke-linejoin="miter"/>
<polyline points="497.7,163.5 497.7,683.8 299.5,683.8" stroke="#ff00ff" stroke-width="2" fill="none" stroke-linejoin="miter"/>
<polyline points="559.8,163.5 559.8,250.1 820.3,250.1" stroke="#806000" stroke-width="2" fill="none" stroke-linejoin="miter"/>
<polyline points="646.5,163.5 646.5,336.9 820.3,336.9" stroke="#ff8000" stroke-width="2" fill="none" stroke-linejoin="miter"/>
<rect x="288.6" y="255.6" width="44.8" height="63.9" stroke="#7a7a88" stroke-width="1.4" fill="#d8d8f8" stroke-dasharray="4.9,2.7"/>
<polyline points="333.4,262.5 302.2,262.5 302.2,312 333.4,312" stroke="#55556f" stroke-width="1.1" fill="none" stroke-linejoin="miter"/>
<polyline points="333.4,275 314.1,275 314.1,299.8 333.4,299.8" stroke="#55556f" stroke-width="1.1" fill="none" stroke-linejoin="miter"/>
<polyline points="329.3,258.9 333.4,262.5 329.3,266.1" stroke="#55556f" stroke-width="1" fill="none" stroke-linejoin="miter"/>
<path d="M333.6,258.3 Q338,262.5 333.6,266.7" stroke="#444" stroke-width="1.1" fill="none" />
<polyline points="329.3,271.4 333.4,275 329.3,278.6" stroke="#55556f" stroke-width="1" fill="none" stroke-linejoin="miter"/>
<path d="M333.6,270.8 Q338,275 333.6,279.2" stroke="#444" stroke-width="1.1" fill="none" />
<polyline points="329.3,296.2 333.4,299.8 329.3,303.4" stroke="#55556f" stroke-width="1" fill="none" stroke-linejoin="miter"/>
<path d="M333.6,295.6 Q338,299.8 333.6,304" stroke="#444" stroke-width="1.1" fill="none" />
<polyline points="329.3,308.4 333.4,312 329.3,315.6" stroke="#55556f" stroke-width="1" fill="none" stroke-linejoin="miter"/>
<path d="M333.6,307.8 Q338,312 333.6,316.2" stroke="#444" stroke-width="1.1" fill="none" />
<text x="336.8" y="260.35" text-anchor="start" font-size="7.4" fill="#424242" >C1</text>
<text x="336.8" y="273.25" text-anchor="start" font-size="7.4" fill="#424242" >C9</text>
<text x="336.8" y="284.85" text-anchor="start" font-size="7.4" fill="#424242" text-decoration="underline" >C3</text>
<text x="336.8" y="297.25" text-anchor="start" font-size="7.4" fill="#424242" >C4</text>
<text x="336.8" y="310.15" text-anchor="start" font-size="7.4" fill="#424242" >C12</text>
<text x="336.8" y="321.85" text-anchor="start" font-size="7.4" fill="#424242" text-decoration="underline" >C1</text>
<text x="354.9" y="260.35" text-anchor="start" font-size="7.4" fill="#424242" >BLK</text>
<text x="354.9" y="273.25" text-anchor="start" font-size="7.4" fill="#424242" >LT GRN/BLK</text>
<text x="354.9" y="297.25" text-anchor="start" font-size="7.4" fill="#424242" >LT GRN/BLK</text>
<text x="354.9" y="310.15" text-anchor="start" font-size="7.4" fill="#424242" >BLK/WHT</text>
<text x="288.3" y="328.85" text-anchor="start" font-size="7.4" fill="#424242" >RIGHT I/P</text>
<text x="288.3" y="337.95" text-anchor="start" font-size="7.4" fill="#424242" >ACCESSORY WIRING</text>
<text x="288.3" y="347.05" text-anchor="start" font-size="7.4" fill="#424242" >JUNCTION BLOCK</text>
<line x1="339.1" y1="262.5" x2="404.5" y2="262.5" stroke="#4a4a4a" stroke-width="1.7" stroke-dasharray="7.2,4.3"/>
<circle cx="410.8" cy="262.5" r="1.8" fill="#111"/>
<text x="411" y="257.25" text-anchor="middle" font-size="7.4" fill="#424242" >S322</text>
<line x1="416.7" y1="262.5" x2="692" y2="262.5" stroke="#4a4a4a" stroke-width="1.6"/>
<path d="M689.6,258.2 Q693.4,262.5 689.6,266.8" stroke="#55556f" stroke-width="1" fill="none" />
<path d="M693.9,258.2 Q697.7,262.5 693.9,266.8" stroke="#55556f" stroke-width="1" fill="none" />
<line x1="697.2" y1="262.5" x2="820.3" y2="262.5" stroke="#505050" stroke-width="1.4"/>
<text x="672.6" y="260.35" text-anchor="middle" font-size="7.4" fill="#424242" >BLK</text>
<polyline points="337.5,275 559.8,275 559.8,287.2 820.3,287.2" stroke="#10f010" stroke-width="2" fill="none" stroke-linejoin="miter"/>
<polyline points="337.5,299.8 423.6,299.8 423.6,411.4 337,411.4" stroke="#10f010" stroke-width="1.9" fill="none" stroke-linejoin="miter"/>
<polyline points="337.5,312 559.9,312" stroke="#777777" stroke-width="1.9" fill="none" stroke-linejoin="miter"/>
<polyline points="559.9,312 559.9,435.85 770.4,435.85 770.4,443.5" stroke="#9a9a9a" stroke-width="1.9" fill="none" stroke-linejoin="miter"/>
<rect x="824.5" y="163.4" width="75.9" height="198.1" stroke="#4a4a66" stroke-width="1.1" fill="#d8d8fb"/>
<text x="816" y="173.45" text-anchor="end" font-size="7.4" fill="#424242" >1</text>
<path d="M822,171.1 Q816.8,175.4 822,179.7" stroke="#666" stroke-width="1.1" fill="none" />
<text x="816" y="185.9" text-anchor="end" font-size="7.4" fill="#424242" >2</text>
<path d="M822,183.55 Q816.8,187.85 822,192.15" stroke="#666" stroke-width="1.1" fill="none" />
<text x="816" y="198.35" text-anchor="end" font-size="7.4" fill="#424242" >3</text>
<path d="M822,196 Q816.8,200.3 822,204.6" stroke="#666" stroke-width="1.1" fill="none" />
<text x="816" y="210.8" text-anchor="end" font-size="7.4" fill="#424242" >4</text>
<path d="M822,208.45 Q816.8,212.75 822,217.05" stroke="#666" stroke-width="1.1" fill="none" />
<text x="816" y="223.25" text-anchor="end" font-size="7.4" fill="#424242" >5</text>
<path d="M822,220.9 Q816.8,225.2 822,229.5" stroke="#666" stroke-width="1.1" fill="none" />
<text x="816" y="235.7" text-anchor="end" font-size="7.4" fill="#424242" >6</text>
<path d="M822,233.35 Q816.8,237.65 822,241.95" stroke="#666" stroke-width="1.1" fill="none" />
<text x="816" y="248.15" text-anchor="end" font-size="7.4" fill="#424242" >7</text>
<path d="M822,245.8 Q816.8,250.1 822,254.4" stroke="#666" stroke-width="1.1" fill="none" />
<text x="816" y="260.6" text-anchor="end" font-size="7.4" fill="#424242" >8</text>
<path d="M822,258.25 Q816.8,262.55 822,266.85" stroke="#666" stroke-width="1.1" fill="none" />
<text x="816" y="273.05" text-anchor="end" font-size="7.4" fill="#424242" >9</text>
<path d="M822,270.7 Q816.8,275 822,279.3" stroke="#666" stroke-width="1.1" fill="none" />
<text x="816" y="285.5" text-anchor="end" font-size="7.4" fill="#424242" >10</text>
<path d="M822,283.15 Q816.8,287.45 822,291.75" stroke="#666" stroke-width="1.1" fill="none" />
<text x="816" y="297.95" text-anchor="end" font-size="7.4" fill="#424242" >11</text>
<path d="M822,295.6 Q816.8,299.9 822,304.2" stroke="#666" stroke-width="1.1" fill="none" />
<text x="816" y="310.4" text-anchor="end" font-size="7.4" fill="#424242" >12</text>
<path d="M822,308.05 Q816.8,312.35 822,316.65" stroke="#666" stroke-width="1.1" fill="none" />
<text x="816" y="322.85" text-anchor="end" font-size="7.4" fill="#424242" >13</text>
<path d="M822,320.5 Q816.8,324.8 822,329.1" stroke="#666" stroke-width="1.1" fill="none" />
<text x="816" y="335.3" text-anchor="end" font-size="7.4" fill="#424242" >14</text>
<path d="M822,332.95 Q816.8,337.25 822,341.55" stroke="#666" stroke-width="1.1" fill="none" />
<text x="816" y="347.75" text-anchor="end" font-size="7.4" fill="#424242" >15</text>
<path d="M822,345.4 Q816.8,349.7 822,354" stroke="#666" stroke-width="1.1" fill="none" />
<text x="827.6" y="253.25" text-anchor="start" font-size="7.4" fill="#424242" >IGNITION</text>
<text x="827.6" y="265.7" text-anchor="start" font-size="7.4" fill="#424242" >GROUND</text>
<text x="827.6" y="290.6" text-anchor="start" font-size="7.4" fill="#424242" >AMBIENT TEMP</text>
<text x="827.6" y="303.05" text-anchor="start" font-size="7.4" fill="#424242" >SUNROOF CLOSE</text>
<text x="827.6" y="315.5" text-anchor="start" font-size="7.4" fill="#424242" >SUNROOF SW</text>
<text x="827.6" y="327.95" text-anchor="start" font-size="7.4" fill="#424242" >SUNROOF OPEN</text>
<text x="827.6" y="340.4" text-anchor="start" font-size="7.4" fill="#424242" >BATTERY</text>
<text x="827.6" y="352.85" text-anchor="start" font-size="7.4" fill="#424242" >SERIAL DATA</text>
<text x="732.2" y="248.05" text-anchor="end" font-size="7.4" fill="#424242" >141</text>
<text x="790.7" y="248.05" text-anchor="end" font-size="7.4" fill="#424242" >BRN</text>
<text x="732.2" y="260.5" text-anchor="end" font-size="7.4" fill="#424242" >1251</text>
<text x="790.7" y="260.5" text-anchor="end" font-size="7.4" fill="#424242" >BLK/WHT</text>
<text x="732.2" y="285.4" text-anchor="end" font-size="7.4" fill="#424242" >735</text>
<text x="790.7" y="285.4" text-anchor="end" font-size="7.4" fill="#424242" >LT GRN/BLK</text>
<text x="732.2" y="297.85" text-anchor="end" font-size="7.4" fill="#424242" >110</text>
<text x="790.7" y="297.85" text-anchor="end" font-size="7.4" fill="#424242" >ORG</text>
<text x="732.2" y="310.3" text-anchor="end" font-size="7.4" fill="#424242" >128</text>
<text x="790.7" y="310.3" text-anchor="end" font-size="7.4" fill="#424242" >DK BLU</text>
<text x="732.2" y="322.75" text-anchor="end" font-size="7.4" fill="#424242" >100</text>
<text x="790.7" y="322.75" text-anchor="end" font-size="7.4" fill="#424242" >BRN</text>
<text x="732.2" y="335.2" text-anchor="end" font-size="7.4" fill="#424242" >2440</text>
<text x="790.7" y="335.2" text-anchor="end" font-size="7.4" fill="#424242" >ORG</text>
<text x="732.2" y="347.65" text-anchor="end" font-size="7.4" fill="#424242" >1127</text>
<text x="790.7" y="347.65" text-anchor="end" font-size="7.4" fill="#424242" >YEL</text>
<line x1="708" y1="299.9" x2="820.3" y2="299.9" stroke="#ff8000" stroke-width="2"/>
<polygon points="701.5,299.9 709.3,295.9 709.3,303.9" fill="#000"/>
<line x1="708" y1="312.35" x2="820.3" y2="312.35" stroke="#0a1a8a" stroke-width="2"/>
<polygon points="701.5,312.35 709.3,308.35 709.3,316.35" fill="#000"/>
<line x1="708" y1="324.8" x2="820.3" y2="324.8" stroke="#806000" stroke-width="2"/>
<polygon points="701.5,324.8 709.3,320.8 709.3,328.8" fill="#000"/>
<line x1="708" y1="349.7" x2="820.3" y2="349.7" stroke="#eef032" stroke-width="2"/>
<polygon points="701.5,349.7 709.3,345.7 709.3,353.7" fill="#000"/>
<path d="M701.8,293.9 Q697.2,295 698.6,303 Q699.6,311 696.2,312.6 Q699.6,314.2 698.6,322 Q697.2,330 701.8,330.8" stroke="#444" stroke-width="0.9" fill="none" />
<text x="690.1" y="306.25" text-anchor="end" font-size="7.4" fill="#424242" >POWER</text>
<text x="690.1" y="315.3" text-anchor="end" font-size="7.4" fill="#424242" >TOPS</text>
<text x="690.1" y="324.35" text-anchor="end" font-size="7.4" fill="#424242" >SYSTEM</text>
<text x="694.7" y="348.45" text-anchor="end" font-size="7.4" fill="#424242" >COMPUTER DATA</text>
<text x="696" y="357.35" text-anchor="end" font-size="7.4" fill="#424242" >LINES SYSTEM</text>
<text x="898.8" y="372.45" text-anchor="end" font-size="7.4" fill="#424242" >DRIVER INFORMATION</text>
<text x="898.3" y="381.45" text-anchor="end" font-size="7.4" fill="#424242" >DISPLAY CONTROL</text>
<text x="900.2" y="390.55" text-anchor="end" font-size="7.4" fill="#424242" >MODULE</text>
<text x="898.3" y="399.55" text-anchor="end" font-size="7.4" fill="#424242" >(IN FRONT CENTER</text>
<text x="906.8" y="408.55" text-anchor="end" font-size="7.4" fill="#424242" >OF ROOF)</text>
<rect x="293.6" y="404.1" width="39.1" height="51" stroke="#8a8a8a" stroke-width="1.3" fill="#ffffff"/>
<polyline points="332.7,411.5 311.6,411.5 311.6,419.1" stroke="#444" stroke-width="1.1" fill="none" stroke-linejoin="miter"/>
<polyline points="311.6,419.1 309.4,420.6 313.8,423.2 309.4,425.8 313.8,428.4 309.4,431 313.8,433.6 309.4,436.2 313.8,438.8 311.6,440.3 311.6,448.8 332.7,448.8" stroke="#333" stroke-width="1.0" fill="none" stroke-linejoin="miter"/>
<line x1="305.3" y1="421.3" x2="315.9" y2="436.4" stroke="#222" stroke-width="0.9"/>
<polygon points="305.3,421.3 309.6,424.3 307.4,426" fill="#111"/>
<polyline points="328.6,408.1 332.7,411.5 328.6,414.9" stroke="#55556f" stroke-width="1" fill="none" stroke-linejoin="miter"/>
<path d="M333,407.2 Q337.6,411.5 333,415.8" stroke="#444" stroke-width="1.1" fill="none" />
<polyline points="328.6,445.4 332.7,448.8 328.6,452.2" stroke="#55556f" stroke-width="1" fill="none" stroke-linejoin="miter"/>
<path d="M333,444.5 Q337.6,448.8 333,453.1" stroke="#444" stroke-width="1.1" fill="none" />
<text x="338.3" y="409.45" text-anchor="start" font-size="7.4" fill="#424242" >A</text>
<text x="353.1" y="409.45" text-anchor="start" font-size="7.4" fill="#424242" >LT GRN/BLK</text>
<text x="338.3" y="446.05" text-anchor="start" font-size="7.4" fill="#424242" >B</text>
<text x="353.1" y="446.05" text-anchor="start" font-size="7.4" fill="#424242" >BLK/WHT</text>
<text x="292.9" y="465.25" text-anchor="start" font-size="7.4" fill="#424242" >AMBIENT AIR</text>
<text x="292.9" y="474.25" text-anchor="start" font-size="7.4" fill="#424242" >TEMPERATURE</text>
<text x="292.9" y="483.25" text-anchor="start" font-size="7.4" fill="#424242" >GAUGE SENSOR</text>
<line x1="337" y1="448.8" x2="702.6" y2="448.8" stroke="#4a4a4a" stroke-width="1.5"/>
<circle cx="708.4" cy="448.8" r="1.8" fill="#111"/>
<line x1="714.2" y1="448.8" x2="765" y2="448.8" stroke="#4a4a4a" stroke-width="1.7" stroke-dasharray="7.2,4.3"/>
<circle cx="770.4" cy="448.8" r="1.8" fill="#111"/>
<line x1="776.9" y1="448.8" x2="864.5" y2="448.8" stroke="#4a4a4a" stroke-width="1.7" stroke-dasharray="7.2,4.3"/>
<circle cx="869.6" cy="448.8" r="1.6" fill="#111"/>
<line x1="869.6" y1="448.8" x2="871.6" y2="448.8" stroke="#444" stroke-width="1"/>
<line x1="872" y1="443.8" x2="872" y2="453.8" stroke="#777" stroke-width="1.1"/>
<line x1="874.2" y1="445" x2="874.2" y2="452.6" stroke="#888" stroke-width="1.0"/>
<line x1="876.4" y1="446.8" x2="876.4" y2="450.8" stroke="#999" stroke-width="1.0"/>
<text x="881.4" y="452.25" text-anchor="start" font-size="7.4" fill="#424242" >G202</text>
<text x="664.2" y="446.05" text-anchor="middle" font-size="7.4" fill="#424242" >BLK/WHT</text>
<text x="738.8" y="433.95" text-anchor="middle" font-size="7.4" fill="#424242" >BLK/WHT</text>
<text x="738.8" y="445.95" text-anchor="middle" font-size="7.4" fill="#424242" >BLK/WHT</text>
<text x="827" y="446.05" text-anchor="middle" font-size="7.4" fill="#424242" >BLK/WHT</text>
<text x="708.2" y="461.05" text-anchor="middle" font-size="7.4" fill="#424242" >S174</text>
<text x="770.3" y="461.05" text-anchor="middle" font-size="7.4" fill="#424242" >S253</text>
<text x="897" y="461.05" text-anchor="end" font-size="7.4" fill="#424242" >(BEHIND LEFT SIDE OF</text>
<text x="897" y="470.05" text-anchor="end" font-size="7.4" fill="#424242" >DASH, ON RIGHT SIDE OF</text>
<text x="899.8" y="479.05" text-anchor="end" font-size="7.4" fill="#424242" >BRAKE PEDAL BRACKET)</text>
<path d="M297,506.35 Q301.6,510.65 297,514.95" stroke="#444" stroke-width="1.1" fill="none" />
<text x="300.8" y="508.3" text-anchor="start" font-size="7.4" fill="#424242" >A1</text>
<text x="326" y="508.3" text-anchor="start" font-size="7.4" fill="#424242" >ORG</text>
<text x="375.6" y="508.3" text-anchor="start" font-size="7.4" fill="#424242" >2140</text>
<path d="M297,531.12 Q301.6,535.42 297,539.72" stroke="#444" stroke-width="1.1" fill="none" />
<text x="300.8" y="533.07" text-anchor="start" font-size="7.4" fill="#424242" >A2</text>
<text x="326" y="533.07" text-anchor="start" font-size="7.4" fill="#424242" >BLK</text>
<text x="375.6" y="533.07" text-anchor="start" font-size="7.4" fill="#424242" >1050</text>
<path d="M297,555.89 Q301.6,560.19 297,564.49" stroke="#444" stroke-width="1.1" fill="none" />
<text x="300.8" y="557.84" text-anchor="start" font-size="7.4" fill="#424242" >A3</text>
<text x="326" y="557.84" text-anchor="start" font-size="7.4" fill="#424242" >YEL/BLK</text>
<text x="375.6" y="557.84" text-anchor="start" font-size="7.4" fill="#424242" >68</text>
<path d="M297,580.66 Q301.6,584.96 297,589.26" stroke="#444" stroke-width="1.1" fill="none" />
<text x="300.8" y="582.61" text-anchor="start" font-size="7.4" fill="#424242" >A4</text>
<text x="326" y="582.61" text-anchor="start" font-size="7.4" fill="#424242" >BLK/WHT</text>
<text x="375.6" y="582.61" text-anchor="start" font-size="7.4" fill="#424242" >1251</text>
<path d="M297,605.43 Q301.6,609.73 297,614.03" stroke="#444" stroke-width="1.1" fill="none" />
<text x="300.8" y="607.38" text-anchor="start" font-size="7.4" fill="#424242" >A5</text>
<text x="326" y="607.38" text-anchor="start" font-size="7.4" fill="#424242" >PPL</text>
<text x="375.6" y="607.38" text-anchor="start" font-size="7.4" fill="#424242" >209</text>
<path d="M297,630.2 Q301.6,634.5 297,638.8" stroke="#444" stroke-width="1.1" fill="none" />
<text x="300.8" y="632.15" text-anchor="start" font-size="7.4" fill="#424242" >A6</text>
<text x="326" y="632.15" text-anchor="start" font-size="7.4" fill="#424242" >DK BLU</text>
<text x="375.6" y="632.15" text-anchor="start" font-size="7.4" fill="#424242" >15</text>
<path d="M297,654.97 Q301.6,659.27 297,663.57" stroke="#444" stroke-width="1.1" fill="none" />
<text x="300.8" y="656.92" text-anchor="start" font-size="7.4" fill="#424242" >A7</text>
<text x="326" y="656.92" text-anchor="start" font-size="7.4" fill="#424242" >GRY</text>
<text x="375.6" y="656.92" text-anchor="start" font-size="7.4" fill="#424242" >1036</text>
<path d="M297,679.74 Q301.6,684.04 297,688.34" stroke="#444" stroke-width="1.1" fill="none" />
<text x="300.8" y="681.69" text-anchor="start" font-size="7.4" fill="#424242" >A8</text>
<text x="326" y="681.69" text-anchor="start" font-size="7.4" fill="#424242" >PPL</text>
<text x="375.6" y="681.69" text-anchor="start" font-size="7.4" fill="#424242" >1500</text>
<path d="M297,704.51 Q301.6,708.81 297,713.11" stroke="#444" stroke-width="1.1" fill="none" />
<text x="300.8" y="706.46" text-anchor="start" font-size="7.4" fill="#424242" >B1</text>
<text x="326" y="706.46" text-anchor="start" font-size="7.4" fill="#424242" >GRY</text>
<text x="375.6" y="706.46" text-anchor="start" font-size="7.4" fill="#424242" >8</text>
<path d="M297,729.28 Q301.6,733.58 297,737.88" stroke="#444" stroke-width="1.1" fill="none" />
<text x="300.8" y="731.23" text-anchor="start" font-size="7.4" fill="#424242" >B2</text>
<text x="326" y="731.23" text-anchor="start" font-size="7.4" fill="#424242" >BRN/WHT</text>
<text x="375.6" y="731.23" text-anchor="start" font-size="7.4" fill="#424242" >419</text>
<path d="M297,754.05 Q301.6,758.35 297,762.65" stroke="#444" stroke-width="1.1" fill="none" />
<text x="300.8" y="756" text-anchor="start" font-size="7.4" fill="#424242" >B3</text>
<path d="M297,778.82 Q301.6,783.12 297,787.42" stroke="#444" stroke-width="1.1" fill="none" />
<text x="300.8" y="780.77" text-anchor="start" font-size="7.4" fill="#424242" >B4</text>
<path d="M297,803.59 Q301.6,807.89 297,812.19" stroke="#444" stroke-width="1.1" fill="none" />
<text x="300.8" y="805.54" text-anchor="start" font-size="7.4" fill="#424242" >B5</text>
<line x1="299.5" y1="535.42" x2="764.4" y2="535.42" stroke="#4a4a4a" stroke-width="1.6"/>
<circle cx="770.4" cy="535.42" r="1.8" fill="#111"/>
<line x1="776.9" y1="535.42" x2="864.5" y2="535.42" stroke="#4a4a4a" stroke-width="1.7" stroke-dasharray="7.2,4.3"/>
<circle cx="869.6" cy="535.42" r="1.6" fill="#111"/>
<line x1="869.6" y1="535.42" x2="871.6" y2="535.42" stroke="#444" stroke-width="1"/>
<line x1="872" y1="530.42" x2="872" y2="540.42" stroke="#777" stroke-width="1.1"/>
<line x1="874.2" y1="531.62" x2="874.2" y2="539.22" stroke="#888" stroke-width="1.0"/>
<line x1="876.4" y1="533.42" x2="876.4" y2="537.42" stroke="#999" stroke-width="1.0"/>
<text x="881.5" y="539.57" text-anchor="start" font-size="7.4" fill="#424242" >G202</text>
<text x="740.6" y="533.15" text-anchor="middle" font-size="7.4" fill="#424242" >BLK</text>
<text x="829.5" y="533.15" text-anchor="middle" font-size="7.4" fill="#424242" >BLK</text>
<text x="770.3" y="548.05" text-anchor="middle" font-size="7.4" fill="#424242" >S229</text>
<text x="897" y="548.05" text-anchor="end" font-size="7.4" fill="#424242" >(BEHIND LEFT SIDE OF</text>
<text x="897" y="557.15" text-anchor="end" font-size="7.4" fill="#424242" >DASH, ON LEFT SIDE OF</text>
<text x="899.8" y="566.25" text-anchor="end" font-size="7.4" fill="#424242" >BRAKE PEDAL BRACKET)</text>
<polyline points="299.5,560.19 745.8,560.19 745.8,836" stroke="#eef032" stroke-width="2" fill="none" stroke-linejoin="miter"/>
<line x1="299.5" y1="584.96" x2="764.4" y2="584.96" stroke="#9a9a9a" stroke-width="1.6"/>
<circle cx="770.4" cy="584.96" r="1.8" fill="#111"/>
<line x1="776.9" y1="584.96" x2="864.5" y2="584.96" stroke="#4a4a4a" stroke-width="1.7" stroke-dasharray="7.2,4.3"/>
<circle cx="869.6" cy="584.96" r="1.6" fill="#111"/>
<line x1="869.6" y1="584.96" x2="871.6" y2="584.96" stroke="#444" stroke-width="1"/>
<line x1="872" y1="579.96" x2="872" y2="589.96" stroke="#777" stroke-width="1.1"/>
<line x1="874.2" y1="581.16" x2="874.2" y2="588.76" stroke="#888" stroke-width="1.0"/>
<line x1="876.4" y1="582.96" x2="876.4" y2="586.96" stroke="#999" stroke-width="1.0"/>
<text x="881.5" y="589.11" text-anchor="start" font-size="7.4" fill="#424242" >G202</text>
<text x="700.2" y="582.45" text-anchor="middle" font-size="7.4" fill="#424242" >BLK/WHT</text>
<text x="826.6" y="581.95" text-anchor="middle" font-size="7.4" fill="#424242" >BLK/WHT</text>
<text x="770.3" y="597.65" text-anchor="middle" font-size="7.4" fill="#424242" >S253</text>
<text x="897" y="597.65" text-anchor="end" font-size="7.4" fill="#424242" >(BEHIND LEFT SIDE OF</text>
<text x="897" y="606.75" text-anchor="end" font-size="7.4" fill="#424242" >DASH, ON RIGHT SIDE OF</text>
<text x="899.8" y="615.85" text-anchor="end" font-size="7.4" fill="#424242" >BRAKE PEDAL BRACKET)</text>
<polyline points="299.5,609.73 621.8,609.73 621.8,836" stroke="#ff00ff" stroke-width="2" fill="none" stroke-linejoin="miter"/>
<line x1="299.5" y1="634.5" x2="758" y2="634.5" stroke="#0a1a8a" stroke-width="2"/>
<polygon points="765,634.5 757.2,630.5 757.2,638.5" fill="#000"/>
<text x="768.2" y="637.35" text-anchor="start" font-size="7.4" fill="#424242" >EXTERIOR LIGHTS SYSTEM</text>
<line x1="299.5" y1="659.27" x2="758" y2="659.27" stroke="#bcbcbc" stroke-width="2"/>
<polygon points="765,659.27 757.2,655.27 757.2,663.27" fill="#000"/>
<text x="768.2" y="662.12" text-anchor="start" font-size="7.4" fill="#424242" >COMPUTER DATA LINES SYSTEM</text>
<line x1="299.5" y1="708.81" x2="758" y2="708.81" stroke="#bcbcbc" stroke-width="2"/>
<polygon points="765,708.81 757.2,704.81 757.2,712.81" fill="#000"/>
<text x="768.2" y="711.66" text-anchor="start" font-size="7.4" fill="#424242" >INTERIOR LIGHTS SYSTEM</text>
<polyline points="299.5,733.58 485.5,733.58 485.5,836" stroke="#8a6818" stroke-width="1.7" fill="none" stroke-linejoin="miter"/>
</g></svg>
</body></html>
